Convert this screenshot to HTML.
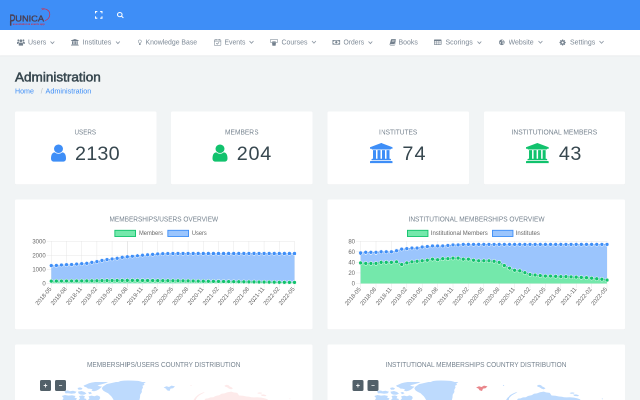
<!DOCTYPE html>
<html><head><meta charset="utf-8"><title>Administration</title>
<style>
html,body{margin:0;padding:0;width:640px;height:400px;overflow:hidden;background:#f1f4f5}
#w{position:absolute;left:0;top:0;width:1280px;height:800px;transform:scale(0.5);transform-origin:0 0;will-change:transform;overflow:hidden;background:#f1f4f5;font-family:"Liberation Sans",sans-serif}
.t{position:absolute;white-space:nowrap;font-family:"Liberation Sans",sans-serif}
.i{position:absolute;overflow:visible}
.b{position:absolute}
.card{position:absolute;background:#fff;border-radius:3px;box-shadow:0 1px 1px rgba(0,0,0,.04)}
svg text{font-family:"Liberation Sans",sans-serif}
</style></head><body><div id="w">
<div class="b" style="left:0;top:0;width:1280px;height:59.5px;background:#3e8ef7"></div>
<svg class="i" style="left:16px;top:12px;width:92px;height:44px;" viewBox="8 6 46 22" preserveAspectRatio="none"><text fill="#4a3f52" stroke="#4a3f52"><tspan x="9.5" y="25.4" font-size="15.3" stroke-width="0.35" textLength="5.9" lengthAdjust="spacingAndGlyphs">P</tspan><tspan x="15.3" y="21.3" font-size="7.9" stroke-width="0.36" textLength="28.7" lengthAdjust="spacingAndGlyphs">UNICA</tspan></text><rect x="9.95" y="21" width="1.45" height="4.6" fill="#4a3f52"/><text x="12.8" y="25.1" font-size="2.9" font-weight="700" fill="#c8324e" textLength="32" lengthAdjust="spacingAndGlyphs">association &amp; events app</text><path d="M42.4 9.3C46.200 8 50 10.800 49.800 14.700C49.600 17.900 47.300 20.100 44.900 20.600" fill="none" stroke="#d42b48" stroke-width="0.7"/><path d="M41.200 8.300l1.300 1.300 0.400-1.700 0.700 1.500 1.200-0.900" fill="none" stroke="#cf2f4b" stroke-width="0.5"/><path d="M42 9.800C40 11.500 38.500 13.500 37.500 15.500" fill="none" stroke="#cf2f4b" stroke-width="0.25" stroke-dasharray="0.4 0.5" opacity=".7"/></svg>
<svg class="i" style="left:189.5px;top:22px;width:15px;height:15.5px;" viewBox="0 0 10 10" preserveAspectRatio="none"><path d="M0.7 3.1V0.7H3.1M6.900 0.7H9.300V3.1M9.300 6.900V9.300H6.900M3.1 9.300H0.7V6.900" fill="none" stroke="#fff" stroke-width="1.4"/></svg>
<svg class="i" style="left:233.8px;top:23.8px;width:13.2px;height:12.2px;" viewBox="64 128 1664 1664" preserveAspectRatio="none"><path d="M1216 832q0-185-131.500-316.500t-316.500-131.500-316.500 131.500-131.500 316.500 131.500 316.500 316.500 131.500 316.500-131.500 131.500-316.500zm512 832q0 52-38 90t-90 38q-54 0-90-38l-343-342q-179 124-399 124-143 0-273.500-55.500t-225-150-150-225-55.500-273.500 55.500-273.500 150-225 225-150 273.500-55.500 273.500 55.500 225 150 150 225 55.500 273.500q0 220-124 399l343 343q37 37 37 90z" fill="#fff"/></svg>
<div class="b" style="left:0;top:59.5px;width:1280px;height:51px;background:#fff;box-shadow:0 1px 2px rgba(0,0,0,.08)"></div>
<span class="t" style="left:56.2px;top:73.849px;font-size:14px;line-height:1.5;color:#7c8895;transform:scaleX(1.0011);transform-origin:0 0;">Users</span>
<svg class="i" style="left:100.4px;top:81.51px;width:9.6px;height:6.18px;" viewBox="-0.5 -0.5 4.8 3.09" preserveAspectRatio="none"><path d="M0 0L1.9 2.09L3.8 0" fill="none" stroke="#8c97a3" stroke-width="0.85"/></svg>
<span class="t" style="left:165px;top:73.849px;font-size:14px;line-height:1.5;color:#7c8895;transform:scaleX(1.0281);transform-origin:0 0;">Institutes</span>
<svg class="i" style="left:230.6px;top:81.51px;width:9.6px;height:6.18px;" viewBox="-0.5 -0.5 4.8 3.09" preserveAspectRatio="none"><path d="M0 0L1.9 2.09L3.8 0" fill="none" stroke="#8c97a3" stroke-width="0.85"/></svg>
<span class="t" style="left:291.2px;top:73.849px;font-size:14px;line-height:1.5;color:#7c8895;transform:scaleX(0.9821);transform-origin:0 0;">Knowledge Base</span>
<span class="t" style="left:449px;top:73.849px;font-size:14px;line-height:1.5;color:#7c8895;transform:scaleX(0.9766);transform-origin:0 0;">Events</span>
<svg class="i" style="left:498.4px;top:81.4px;width:10px;height:6.4px;" viewBox="-0.5 -0.5 5 3.2" preserveAspectRatio="none"><path d="M0 0L2 2.2L4 0" fill="none" stroke="#8c97a3" stroke-width="0.85"/></svg>
<span class="t" style="left:563px;top:73.849px;font-size:14px;line-height:1.5;color:#7c8895;transform:scaleX(0.9975);transform-origin:0 0;">Courses</span>
<svg class="i" style="left:622.8px;top:81.455px;width:9.8px;height:6.29px;" viewBox="-0.5 -0.5 4.9 3.145" preserveAspectRatio="none"><path d="M0 0L1.95 2.145L3.9 0" fill="none" stroke="#8c97a3" stroke-width="0.85"/></svg>
<span class="t" style="left:686.8px;top:73.849px;font-size:14px;line-height:1.5;color:#7c8895;transform:scaleX(0.9629);transform-origin:0 0;">Orders</span>
<svg class="i" style="left:735.6px;top:81.51px;width:9.6px;height:6.18px;" viewBox="-0.5 -0.5 4.8 3.09" preserveAspectRatio="none"><path d="M0 0L1.9 2.09L3.8 0" fill="none" stroke="#8c97a3" stroke-width="0.85"/></svg>
<span class="t" style="left:797.4px;top:73.849px;font-size:14px;line-height:1.5;color:#7c8895;transform:scaleX(0.9920);transform-origin:0 0;">Books</span>
<span class="t" style="left:890.8px;top:73.849px;font-size:14px;line-height:1.5;color:#7c8895;transform:scaleX(0.9987);transform-origin:0 0;">Scorings</span>
<svg class="i" style="left:953.6px;top:81.51px;width:9.6px;height:6.18px;" viewBox="-0.5 -0.5 4.8 3.09" preserveAspectRatio="none"><path d="M0 0L1.9 2.09L3.8 0" fill="none" stroke="#8c97a3" stroke-width="0.85"/></svg>
<span class="t" style="left:1017.4px;top:73.849px;font-size:14px;line-height:1.5;color:#7c8895;transform:scaleX(1.0016);transform-origin:0 0;">Website</span>
<svg class="i" style="left:1075.6px;top:81.455px;width:9.8px;height:6.29px;" viewBox="-0.5 -0.5 4.9 3.145" preserveAspectRatio="none"><path d="M0 0L1.95 2.145L3.9 0" fill="none" stroke="#8c97a3" stroke-width="0.85"/></svg>
<span class="t" style="left:1139.6px;top:73.849px;font-size:14px;line-height:1.5;color:#7c8895;transform:scaleX(0.9963);transform-origin:0 0;">Settings</span>
<svg class="i" style="left:1198.2px;top:81.345px;width:10.2px;height:6.51px;" viewBox="-0.5 -0.5 5.1 3.255" preserveAspectRatio="none"><path d="M0 0L2.05 2.255L4.1 0" fill="none" stroke="#8c97a3" stroke-width="0.85"/></svg>
<svg class="i" style="left:34.2px;top:78.2px;width:15.6px;height:13.2px;" viewBox="0 0 16 13" preserveAspectRatio="none"><g fill="#73808d"><circle cx="8" cy="3.4" r="2.6"/><path d="M3.6 13V10.2Q3.6 7 8 7T12.400 10.2V13z"/><circle cx="2.8" cy="2.6" r="1.9"/><circle cx="13.2" cy="2.6" r="1.9"/><path d="M0 9.500V7.600Q0 5.200 3.200 5.200Q4.500 5.200 5.200 5.800Q3 7 2.800 9.500zM16 9.500V7.600Q16 5.200 12.800 5.200Q11.500 5.200 10.800 5.800Q13 7 13.200 9.500z"/></g></svg>
<svg class="i" style="left:142.3px;top:78.3px;width:15.5px;height:13.1px;" viewBox="64 0 1920 1792" preserveAspectRatio="none"><path d="M1024 0l960 384v128h-128q0 26-20.500 45t-48.500 19h-1526q-28 0-48.500-19t-20.500-45h-128v-128zm-704 640h256v768h128v-768h256v768h128v-768h256v768h128v-768h256v768h59q28 0 48.500 19t20.500 45v64h-1664v-64q0-26 20.500-45t48.500-19h59v-768zm1595 960q28 0 48.500 19t20.500 45v128h-1920v-128q0-26 20.500-45t48.500-19h1782z" fill="#73808d"/></svg>
<svg class="i" style="left:276.2px;top:79.2px;width:7.4px;height:11.2px;" viewBox="0 0 8 12" preserveAspectRatio="none"><path d="M4 0.700A3.300 3.300 0 0 0 2.200 6.800Q2.700 7.400 2.700 8.400H5.300Q5.300 7.400 5.800 6.800A3.300 3.300 0 0 0 4 0.700z" fill="none" stroke="#73808d" stroke-width="1.1"/><rect x="2.500" y="9.200" width="3" height="2.600" rx="0.8" fill="#73808d"/></svg>
<svg class="i" style="left:427.8px;top:78.2px;width:14.4px;height:13.4px;" viewBox="0 0 14 13" preserveAspectRatio="none"><rect x="0.600" y="1.700" width="12.800" height="10.700" rx="0.8" fill="none" stroke="#73808d" stroke-width="1.0"/><path d="M0.600 4.200H13.400" stroke="#73808d" stroke-width="0.9"/><rect x="3.200" y="0" width="1.500" height="2.800" fill="#73808d"/><rect x="9.300" y="0" width="1.500" height="2.800" fill="#73808d"/><path d="M4.200 8.200L6.300 10.100L9.800 6.500" fill="none" stroke="#73808d" stroke-width="1.2"/></svg>
<svg class="i" style="left:541.2px;top:78px;width:14px;height:13.6px;" viewBox="0 0 14 13" preserveAspectRatio="none"><rect x="0.500" y="0.500" width="13" height="6.400" fill="none" stroke="#73808d" stroke-width="1.0"/><circle cx="5.200" cy="5.400" r="1.400" fill="#73808d"/><circle cx="8.800" cy="5.400" r="1.400" fill="#73808d"/><path d="M3 6.600H11L10.200 13H3.800z" fill="#73808d"/></svg>
<svg class="i" style="left:664.6px;top:79.8px;width:15.2px;height:9.2px;" viewBox="0 0 16 9.500" preserveAspectRatio="none"><rect x="0.700" y="0.700" width="14.600" height="8.100" fill="none" stroke="#73808d" stroke-width="1.4"/><ellipse cx="8" cy="4.750" rx="2.400" ry="2.600" fill="#73808d"/><path d="M1.400 1.400H4Q4 3.400 1.400 3.600zM14.600 1.400H12Q12 3.400 14.600 3.600zM1.400 8.100H4Q4 6.100 1.400 5.900zM14.600 8.100H12Q12 6.100 14.600 5.900z" fill="#73808d"/></svg>
<svg class="i" style="left:779.4px;top:77.8px;width:13px;height:13px;" viewBox="0 0 13 13" preserveAspectRatio="none"><path d="M4.200 0.300H12Q13 0.500 12.700 1.600L10.400 9.600Q10.100 10.500 9.200 10.500H1.800Q1 10.700 1.400 11.400Q1.800 11.900 2.600 11.900H9.800Q10.500 11.900 10.800 11.100L12.900 3.800Q13.300 4.500 13 5.400L10.900 12.100Q10.600 13 9.600 13H2.400Q0.600 12.900 0.200 11.300Q0 10.400 0.600 9.400L3 1.300Q3.300 0.300 4.200 0.300z" fill="#73808d"/><path d="M5.200 2.800H10.400M4.600 4.800H9.800" stroke="#fff" stroke-width="0.8"/></svg>
<svg class="i" style="left:868.4px;top:78.8px;width:15px;height:11px;" viewBox="0 0 15 11" preserveAspectRatio="none"><rect x="0.600" y="0.600" width="13.800" height="9.800" rx="0.8" fill="none" stroke="#73808d" stroke-width="1.2"/><rect x="0.600" y="0.600" width="13.800" height="2.800" fill="#73808d"/><path d="M5.200 3V10.400M9.800 3V10.400M0.600 6.800H14.400" stroke="#73808d" stroke-width="0.9" fill="none"/></svg>
<svg class="i" style="left:998px;top:79.4px;width:11.2px;height:11.2px;" viewBox="0 0 12 12" preserveAspectRatio="none"><circle cx="6" cy="6" r="6" fill="#73808d"/><path d="M6.500 1.200Q9 1.200 10.400 3.600L9 4.600L7.600 3.800L6.400 4.800L5.600 3.600zM7.400 6Q9.600 5.600 10.800 6.800Q10.400 9.400 8.400 10.400Q7.800 8.600 7 8zM1.400 4.400Q2.600 5.600 4 6L4.400 7.600L3.600 9.400Q1.200 7.600 1.400 4.400z" fill="#fff" opacity=".85"/></svg>
<svg class="i" style="left:1119px;top:79px;width:12.4px;height:12px;" viewBox="128 128 1536 1536" preserveAspectRatio="none"><path d="M1152 896q0-106-75-181t-181-75-181 75-75 181 75 181 181 75 181-75 75-181zm512-109v222q0 12-8 23t-20 13l-185 28q-19 54-39 91 35 50 107 138 10 12 10 25t-9 23q-27 37-99 108t-94 71q-12 0-26-9l-138-108q-44 23-91 38-16 136-29 186-7 28-36 28h-222q-14 0-24.500-8.500t-11.500-21.500l-28-184q-49-16-90-37l-141 107q-10 9-25 9-14 0-25-11-126-114-165-168-7-10-7-23 0-12 8-23 15-21 51-66.500t54-70.500q-27-50-41-99l-183-27q-13-2-21-12.500t-8-23.500v-222q0-12 8-23t19-13l186-28q14-46 39-92-40-57-107-138-10-12-10-24 0-10 9-23 26-36 98.500-107.500t94.500-71.500q13 0 26 10l138 107q44-23 91-38 16-136 29-186 7-28 36-28h222q14 0 24.500 8.500t11.500 21.500l28 184q49 16 90 37l142-107q9-9 24-9 13 0 25 10 129 119 165 170 7 8 7 22 0 12-8 23-15 21-51 66.500t-54 70.500q26 50 41 98l183 28q13 2 21 12.500t8 23.500z" fill="#73808d"/></svg>
<span class="t" style="left:30px;top:136.368px;font-size:25.2px;line-height:1.5;color:#37474f;transform:scaleX(1.0747);transform-origin:0 0;-webkit-text-stroke:1px #37474f;">Administration</span>
<span class="t" style="left:30px;top:171.649px;font-size:14px;line-height:1.5;color:#3e8ef7;transform:scaleX(1.0122);transform-origin:0 0;">Home</span>
<span class="t" style="left:81.4px;top:171.649px;font-size:14px;line-height:1.5;color:#b4bcc4;">/</span>
<span class="t" style="left:90.8px;top:171.649px;font-size:14px;line-height:1.5;color:#3e8ef7;transform:scaleX(1.0327);transform-origin:0 0;">Administration</span>
<div class="card" style="left:30px;top:222.5px;width:282.8px;height:146.5px"></div>
<span class="t" style="left:149.4px;top:253.849px;font-size:14px;line-height:1.5;color:#76838f;transform:scaleX(0.8956);transform-origin:0 0;">USERS</span>
<svg class="i" style="left:102px;top:289.2px;width:30px;height:34.2px;" viewBox="256 128 1280 1536" preserveAspectRatio="none"><path d="M1536 1399q0 109-62.500 187t-150.500 78h-854q-88 0-150.500-78t-62.500-187q0-85 8.500-160.500t31.500-152 58.500-131 94-89 134.500-34.500q131 128 313 128t313-128q76 0 134.500 34.500t94 89 58.500 131 31.500 152 8.500 160.500zm-256-887q0 159-112.500 271.500t-271.500 112.500-271.500-112.500-112.500-271.500 112.500-271.500 271.500-112.500 271.500 112.500 112.500 271.500z" fill="#3e8ef7"/></svg>
<span class="t" style="left:150.018px;top:277.479px;font-size:39.6px;line-height:1.5;color:#37474f;letter-spacing:0.417px;">2130</span>
<div class="card" style="left:342.2px;top:222.5px;width:282.8px;height:146.5px"></div>
<span class="t" style="left:450.2px;top:253.849px;font-size:14px;line-height:1.5;color:#76838f;transform:scaleX(0.9465);transform-origin:0 0;">MEMBERS</span>
<svg class="i" style="left:425.2px;top:289.2px;width:30px;height:34.2px;" viewBox="256 128 1280 1536" preserveAspectRatio="none"><path d="M1536 1399q0 109-62.500 187t-150.500 78h-854q-88 0-150.500-78t-62.500-187q0-85 8.500-160.500t31.500-152 58.500-131 94-89 134.500-34.500q131 128 313 128t313-128q76 0 134.500 34.500t94 89 58.500 131 31.500 152 8.500 160.500zm-256-887q0 159-112.500 271.500t-271.500 112.500-271.500-112.500-112.500-271.500 112.500-271.500 271.500-112.500 271.500 112.500 112.500 271.500z" fill="#11c26d"/></svg>
<span class="t" style="left:473.618px;top:277.479px;font-size:39.6px;line-height:1.5;color:#37474f;letter-spacing:1.431px;">204</span>
<div class="card" style="left:655px;top:222.5px;width:282.8px;height:146.5px"></div>
<span class="t" style="left:758px;top:253.849px;font-size:14px;line-height:1.5;color:#76838f;transform:scaleX(0.9379);transform-origin:0 0;">INSTITUTES</span>
<svg class="i" style="left:740px;top:286.4px;width:45px;height:40.2px;" viewBox="64 0 1920 1792" preserveAspectRatio="none"><path d="M1024 0l960 384v128h-128q0 26-20.500 45t-48.500 19h-1526q-28 0-48.500-19t-20.500-45h-128v-128zm-704 640h256v768h128v-768h256v768h128v-768h256v768h128v-768h256v768h59q28 0 48.500 19t20.500 45v64h-1664v-64q0-26 20.500-45t48.500-19h59v-768zm1595 960q28 0 48.500 19t20.500 45v128h-1920v-128q0-26 20.500-45t48.500-19h1782z" fill="#3e8ef7"/></svg>
<span class="t" style="left:804.818px;top:277.479px;font-size:39.6px;line-height:1.5;color:#37474f;letter-spacing:2.158px;">74</span>
<div class="card" style="left:967.6px;top:222.5px;width:282.8px;height:146.5px"></div>
<span class="t" style="left:1023.4px;top:253.849px;font-size:14px;line-height:1.5;color:#76838f;transform:scaleX(0.9567);transform-origin:0 0;">INSTITUTIONAL MEMBERS</span>
<svg class="i" style="left:1051.6px;top:286.4px;width:45.4px;height:40.2px;" viewBox="64 0 1920 1792" preserveAspectRatio="none"><path d="M1024 0l960 384v128h-128q0 26-20.500 45t-48.500 19h-1526q-28 0-48.500-19t-20.500-45h-128v-128zm-704 640h256v768h128v-768h256v768h128v-768h256v768h128v-768h256v768h59q28 0 48.500 19t20.500 45v64h-1664v-64q0-26 20.500-45t48.500-19h59v-768zm1595 960q28 0 48.500 19t20.500 45v128h-1920v-128q0-26 20.500-45t48.500-19h1782z" fill="#11c26d"/></svg>
<span class="t" style="left:1117.818px;top:277.479px;font-size:39.6px;line-height:1.5;color:#37474f;letter-spacing:0.958px;">43</span>
<div class="card" style="left:30px;top:399px;width:595px;height:259.5px"></div>
<span class="t" style="left:218.9px;top:428.249px;font-size:14px;line-height:1.5;color:#76838f;transform:scaleX(0.9259);transform-origin:0 0;">MEMBERSHIPS/USERS OVERVIEW</span>
<svg class="i" style="left:30px;top:399px;width:595px;height:259.5px;" viewBox="15 199.5 297.5 129.75" preserveAspectRatio="none"><path d="M51.30 241.25V287.75" stroke="#e6e6e6" stroke-width="0.5"/><path d="M66.50 241.25V287.75" stroke="#e6e6e6" stroke-width="0.5"/><path d="M81.70 241.25V287.75" stroke="#e6e6e6" stroke-width="0.5"/><path d="M96.90 241.25V287.75" stroke="#e6e6e6" stroke-width="0.5"/><path d="M112.10 241.25V287.75" stroke="#e6e6e6" stroke-width="0.5"/><path d="M127.30 241.25V287.75" stroke="#e6e6e6" stroke-width="0.5"/><path d="M142.50 241.25V287.75" stroke="#e6e6e6" stroke-width="0.5"/><path d="M157.70 241.25V287.75" stroke="#e6e6e6" stroke-width="0.5"/><path d="M172.90 241.25V287.75" stroke="#e6e6e6" stroke-width="0.5"/><path d="M188.10 241.25V287.75" stroke="#e6e6e6" stroke-width="0.5"/><path d="M203.30 241.25V287.75" stroke="#e6e6e6" stroke-width="0.5"/><path d="M218.50 241.25V287.75" stroke="#e6e6e6" stroke-width="0.5"/><path d="M233.70 241.25V287.75" stroke="#e6e6e6" stroke-width="0.5"/><path d="M248.90 241.25V287.75" stroke="#e6e6e6" stroke-width="0.5"/><path d="M264.10 241.25V287.75" stroke="#e6e6e6" stroke-width="0.5"/><path d="M279.30 241.25V287.75" stroke="#e6e6e6" stroke-width="0.5"/><path d="M294.50 241.25V287.75" stroke="#e6e6e6" stroke-width="0.5"/><path d="M46.80 283.25H294.50" stroke="#e6e6e6" stroke-width="0.5"/><text x="45.70" y="285.40" font-size="6" fill="#666" text-anchor="end">0</text><path d="M46.80 269.25H294.50" stroke="#e6e6e6" stroke-width="0.5"/><text x="45.70" y="271.40" font-size="6" fill="#666" text-anchor="end">1000</text><path d="M46.80 255.25H294.50" stroke="#e6e6e6" stroke-width="0.5"/><text x="45.70" y="257.40" font-size="6" fill="#666" text-anchor="end">2000</text><path d="M46.80 241.25H294.50" stroke="#e6e6e6" stroke-width="0.5"/><text x="45.70" y="243.40" font-size="6" fill="#666" text-anchor="end">3000</text><path d="M51.30 283.25L51.30 265.61 L56.37 265.47 L61.43 265.05 L66.50 264.70 L71.57 264.56 L76.63 264.14 L81.70 263.72 L86.77 263.37 L91.83 262.39 L96.90 261.62 L101.97 260.43 L107.03 259.59 L112.10 259.03 L117.17 258.33 L122.23 257.35 L127.30 256.79 L132.37 256.23 L137.43 255.67 L142.50 255.25 L147.57 254.83 L152.63 254.41 L157.70 253.99 L162.77 253.71 L167.83 253.57 L172.90 253.50 L177.97 253.43 L183.03 253.43 L188.10 253.43 L193.17 253.43 L198.23 253.43 L203.30 253.43 L208.37 253.43 L213.43 253.43 L218.50 253.43 L223.57 253.43 L228.63 253.43 L233.70 253.43 L238.77 253.43 L243.83 253.43 L248.90 253.43 L253.97 253.43 L259.03 253.43 L264.10 253.43 L269.17 253.43 L274.23 253.43 L279.30 253.43 L284.37 253.43 L289.43 253.43 L294.50 253.43L294.50 283.25Z" fill="#9bc5fd"/><path d="M51.30 265.61 L56.37 265.47 L61.43 265.05 L66.50 264.70 L71.57 264.56 L76.63 264.14 L81.70 263.72 L86.77 263.37 L91.83 262.39 L96.90 261.62 L101.97 260.43 L107.03 259.59 L112.10 259.03 L117.17 258.33 L122.23 257.35 L127.30 256.79 L132.37 256.23 L137.43 255.67 L142.50 255.25 L147.57 254.83 L152.63 254.41 L157.70 253.99 L162.77 253.71 L167.83 253.57 L172.90 253.50 L177.97 253.43 L183.03 253.43 L188.10 253.43 L193.17 253.43 L198.23 253.43 L203.30 253.43 L208.37 253.43 L213.43 253.43 L218.50 253.43 L223.57 253.43 L228.63 253.43 L233.70 253.43 L238.77 253.43 L243.83 253.43 L248.90 253.43 L253.97 253.43 L259.03 253.43 L264.10 253.43 L269.17 253.43 L274.23 253.43 L279.30 253.43 L284.37 253.43 L289.43 253.43 L294.50 253.43" fill="none" stroke="#3e8ef7" stroke-width="0.6"/><path d="M51.30 283.25L51.30 281.15 L56.37 281.08 L61.43 281.04 L66.50 281.01 L71.57 280.98 L76.63 280.94 L81.70 280.90 L86.77 280.87 L91.83 280.80 L96.90 280.73 L101.97 280.59 L107.03 280.52 L112.10 280.48 L117.17 280.45 L122.23 280.42 L127.30 280.38 L132.37 280.38 L137.43 280.38 L142.50 280.45 L147.57 280.48 L152.63 280.52 L157.70 280.59 L162.77 280.62 L167.83 280.66 L172.90 280.70 L177.97 280.73 L183.03 280.80 L188.10 280.87 L193.17 281.01 L198.23 281.15 L203.30 281.22 L208.37 281.29 L213.43 281.36 L218.50 281.43 L223.57 281.50 L228.63 281.57 L233.70 281.64 L238.77 281.71 L243.83 281.78 L248.90 281.85 L253.97 281.92 L259.03 281.99 L264.10 282.06 L269.17 282.13 L274.23 282.20 L279.30 282.27 L284.37 282.34 L289.43 282.38 L294.50 282.41L294.50 283.25Z" fill="#74e8ab"/><path d="M51.30 281.15 L56.37 281.08 L61.43 281.04 L66.50 281.01 L71.57 280.98 L76.63 280.94 L81.70 280.90 L86.77 280.87 L91.83 280.80 L96.90 280.73 L101.97 280.59 L107.03 280.52 L112.10 280.48 L117.17 280.45 L122.23 280.42 L127.30 280.38 L132.37 280.38 L137.43 280.38 L142.50 280.45 L147.57 280.48 L152.63 280.52 L157.70 280.59 L162.77 280.62 L167.83 280.66 L172.90 280.70 L177.97 280.73 L183.03 280.80 L188.10 280.87 L193.17 281.01 L198.23 281.15 L203.30 281.22 L208.37 281.29 L213.43 281.36 L218.50 281.43 L223.57 281.50 L228.63 281.57 L233.70 281.64 L238.77 281.71 L243.83 281.78 L248.90 281.85 L253.97 281.92 L259.03 281.99 L264.10 282.06 L269.17 282.13 L274.23 282.20 L279.30 282.27 L284.37 282.34 L289.43 282.38 L294.50 282.41" fill="none" stroke="#11c26d" stroke-width="0.6"/><circle cx="51.30" cy="265.61" r="1.95" fill="#3e8ef7" stroke="#fff" stroke-width="0.5"/><circle cx="56.37" cy="265.47" r="1.95" fill="#3e8ef7" stroke="#fff" stroke-width="0.5"/><circle cx="61.43" cy="265.05" r="1.95" fill="#3e8ef7" stroke="#fff" stroke-width="0.5"/><circle cx="66.50" cy="264.70" r="1.95" fill="#3e8ef7" stroke="#fff" stroke-width="0.5"/><circle cx="71.57" cy="264.56" r="1.95" fill="#3e8ef7" stroke="#fff" stroke-width="0.5"/><circle cx="76.63" cy="264.14" r="1.95" fill="#3e8ef7" stroke="#fff" stroke-width="0.5"/><circle cx="81.70" cy="263.72" r="1.95" fill="#3e8ef7" stroke="#fff" stroke-width="0.5"/><circle cx="86.77" cy="263.37" r="1.95" fill="#3e8ef7" stroke="#fff" stroke-width="0.5"/><circle cx="91.83" cy="262.39" r="1.95" fill="#3e8ef7" stroke="#fff" stroke-width="0.5"/><circle cx="96.90" cy="261.62" r="1.95" fill="#3e8ef7" stroke="#fff" stroke-width="0.5"/><circle cx="101.97" cy="260.43" r="1.95" fill="#3e8ef7" stroke="#fff" stroke-width="0.5"/><circle cx="107.03" cy="259.59" r="1.95" fill="#3e8ef7" stroke="#fff" stroke-width="0.5"/><circle cx="112.10" cy="259.03" r="1.95" fill="#3e8ef7" stroke="#fff" stroke-width="0.5"/><circle cx="117.17" cy="258.33" r="1.95" fill="#3e8ef7" stroke="#fff" stroke-width="0.5"/><circle cx="122.23" cy="257.35" r="1.95" fill="#3e8ef7" stroke="#fff" stroke-width="0.5"/><circle cx="127.30" cy="256.79" r="1.95" fill="#3e8ef7" stroke="#fff" stroke-width="0.5"/><circle cx="132.37" cy="256.23" r="1.95" fill="#3e8ef7" stroke="#fff" stroke-width="0.5"/><circle cx="137.43" cy="255.67" r="1.95" fill="#3e8ef7" stroke="#fff" stroke-width="0.5"/><circle cx="142.50" cy="255.25" r="1.95" fill="#3e8ef7" stroke="#fff" stroke-width="0.5"/><circle cx="147.57" cy="254.83" r="1.95" fill="#3e8ef7" stroke="#fff" stroke-width="0.5"/><circle cx="152.63" cy="254.41" r="1.95" fill="#3e8ef7" stroke="#fff" stroke-width="0.5"/><circle cx="157.70" cy="253.99" r="1.95" fill="#3e8ef7" stroke="#fff" stroke-width="0.5"/><circle cx="162.77" cy="253.71" r="1.95" fill="#3e8ef7" stroke="#fff" stroke-width="0.5"/><circle cx="167.83" cy="253.57" r="1.95" fill="#3e8ef7" stroke="#fff" stroke-width="0.5"/><circle cx="172.90" cy="253.50" r="1.95" fill="#3e8ef7" stroke="#fff" stroke-width="0.5"/><circle cx="177.97" cy="253.43" r="1.95" fill="#3e8ef7" stroke="#fff" stroke-width="0.5"/><circle cx="183.03" cy="253.43" r="1.95" fill="#3e8ef7" stroke="#fff" stroke-width="0.5"/><circle cx="188.10" cy="253.43" r="1.95" fill="#3e8ef7" stroke="#fff" stroke-width="0.5"/><circle cx="193.17" cy="253.43" r="1.95" fill="#3e8ef7" stroke="#fff" stroke-width="0.5"/><circle cx="198.23" cy="253.43" r="1.95" fill="#3e8ef7" stroke="#fff" stroke-width="0.5"/><circle cx="203.30" cy="253.43" r="1.95" fill="#3e8ef7" stroke="#fff" stroke-width="0.5"/><circle cx="208.37" cy="253.43" r="1.95" fill="#3e8ef7" stroke="#fff" stroke-width="0.5"/><circle cx="213.43" cy="253.43" r="1.95" fill="#3e8ef7" stroke="#fff" stroke-width="0.5"/><circle cx="218.50" cy="253.43" r="1.95" fill="#3e8ef7" stroke="#fff" stroke-width="0.5"/><circle cx="223.57" cy="253.43" r="1.95" fill="#3e8ef7" stroke="#fff" stroke-width="0.5"/><circle cx="228.63" cy="253.43" r="1.95" fill="#3e8ef7" stroke="#fff" stroke-width="0.5"/><circle cx="233.70" cy="253.43" r="1.95" fill="#3e8ef7" stroke="#fff" stroke-width="0.5"/><circle cx="238.77" cy="253.43" r="1.95" fill="#3e8ef7" stroke="#fff" stroke-width="0.5"/><circle cx="243.83" cy="253.43" r="1.95" fill="#3e8ef7" stroke="#fff" stroke-width="0.5"/><circle cx="248.90" cy="253.43" r="1.95" fill="#3e8ef7" stroke="#fff" stroke-width="0.5"/><circle cx="253.97" cy="253.43" r="1.95" fill="#3e8ef7" stroke="#fff" stroke-width="0.5"/><circle cx="259.03" cy="253.43" r="1.95" fill="#3e8ef7" stroke="#fff" stroke-width="0.5"/><circle cx="264.10" cy="253.43" r="1.95" fill="#3e8ef7" stroke="#fff" stroke-width="0.5"/><circle cx="269.17" cy="253.43" r="1.95" fill="#3e8ef7" stroke="#fff" stroke-width="0.5"/><circle cx="274.23" cy="253.43" r="1.95" fill="#3e8ef7" stroke="#fff" stroke-width="0.5"/><circle cx="279.30" cy="253.43" r="1.95" fill="#3e8ef7" stroke="#fff" stroke-width="0.5"/><circle cx="284.37" cy="253.43" r="1.95" fill="#3e8ef7" stroke="#fff" stroke-width="0.5"/><circle cx="289.43" cy="253.43" r="1.95" fill="#3e8ef7" stroke="#fff" stroke-width="0.5"/><circle cx="294.50" cy="253.43" r="1.95" fill="#3e8ef7" stroke="#fff" stroke-width="0.5"/><circle cx="51.30" cy="281.15" r="1.95" fill="#11c26d" stroke="#fff" stroke-width="0.5"/><circle cx="56.37" cy="281.08" r="1.95" fill="#11c26d" stroke="#fff" stroke-width="0.5"/><circle cx="61.43" cy="281.04" r="1.95" fill="#11c26d" stroke="#fff" stroke-width="0.5"/><circle cx="66.50" cy="281.01" r="1.95" fill="#11c26d" stroke="#fff" stroke-width="0.5"/><circle cx="71.57" cy="280.98" r="1.95" fill="#11c26d" stroke="#fff" stroke-width="0.5"/><circle cx="76.63" cy="280.94" r="1.95" fill="#11c26d" stroke="#fff" stroke-width="0.5"/><circle cx="81.70" cy="280.90" r="1.95" fill="#11c26d" stroke="#fff" stroke-width="0.5"/><circle cx="86.77" cy="280.87" r="1.95" fill="#11c26d" stroke="#fff" stroke-width="0.5"/><circle cx="91.83" cy="280.80" r="1.95" fill="#11c26d" stroke="#fff" stroke-width="0.5"/><circle cx="96.90" cy="280.73" r="1.95" fill="#11c26d" stroke="#fff" stroke-width="0.5"/><circle cx="101.97" cy="280.59" r="1.95" fill="#11c26d" stroke="#fff" stroke-width="0.5"/><circle cx="107.03" cy="280.52" r="1.95" fill="#11c26d" stroke="#fff" stroke-width="0.5"/><circle cx="112.10" cy="280.48" r="1.95" fill="#11c26d" stroke="#fff" stroke-width="0.5"/><circle cx="117.17" cy="280.45" r="1.95" fill="#11c26d" stroke="#fff" stroke-width="0.5"/><circle cx="122.23" cy="280.42" r="1.95" fill="#11c26d" stroke="#fff" stroke-width="0.5"/><circle cx="127.30" cy="280.38" r="1.95" fill="#11c26d" stroke="#fff" stroke-width="0.5"/><circle cx="132.37" cy="280.38" r="1.95" fill="#11c26d" stroke="#fff" stroke-width="0.5"/><circle cx="137.43" cy="280.38" r="1.95" fill="#11c26d" stroke="#fff" stroke-width="0.5"/><circle cx="142.50" cy="280.45" r="1.95" fill="#11c26d" stroke="#fff" stroke-width="0.5"/><circle cx="147.57" cy="280.48" r="1.95" fill="#11c26d" stroke="#fff" stroke-width="0.5"/><circle cx="152.63" cy="280.52" r="1.95" fill="#11c26d" stroke="#fff" stroke-width="0.5"/><circle cx="157.70" cy="280.59" r="1.95" fill="#11c26d" stroke="#fff" stroke-width="0.5"/><circle cx="162.77" cy="280.62" r="1.95" fill="#11c26d" stroke="#fff" stroke-width="0.5"/><circle cx="167.83" cy="280.66" r="1.95" fill="#11c26d" stroke="#fff" stroke-width="0.5"/><circle cx="172.90" cy="280.70" r="1.95" fill="#11c26d" stroke="#fff" stroke-width="0.5"/><circle cx="177.97" cy="280.73" r="1.95" fill="#11c26d" stroke="#fff" stroke-width="0.5"/><circle cx="183.03" cy="280.80" r="1.95" fill="#11c26d" stroke="#fff" stroke-width="0.5"/><circle cx="188.10" cy="280.87" r="1.95" fill="#11c26d" stroke="#fff" stroke-width="0.5"/><circle cx="193.17" cy="281.01" r="1.95" fill="#11c26d" stroke="#fff" stroke-width="0.5"/><circle cx="198.23" cy="281.15" r="1.95" fill="#11c26d" stroke="#fff" stroke-width="0.5"/><circle cx="203.30" cy="281.22" r="1.95" fill="#11c26d" stroke="#fff" stroke-width="0.5"/><circle cx="208.37" cy="281.29" r="1.95" fill="#11c26d" stroke="#fff" stroke-width="0.5"/><circle cx="213.43" cy="281.36" r="1.95" fill="#11c26d" stroke="#fff" stroke-width="0.5"/><circle cx="218.50" cy="281.43" r="1.95" fill="#11c26d" stroke="#fff" stroke-width="0.5"/><circle cx="223.57" cy="281.50" r="1.95" fill="#11c26d" stroke="#fff" stroke-width="0.5"/><circle cx="228.63" cy="281.57" r="1.95" fill="#11c26d" stroke="#fff" stroke-width="0.5"/><circle cx="233.70" cy="281.64" r="1.95" fill="#11c26d" stroke="#fff" stroke-width="0.5"/><circle cx="238.77" cy="281.71" r="1.95" fill="#11c26d" stroke="#fff" stroke-width="0.5"/><circle cx="243.83" cy="281.78" r="1.95" fill="#11c26d" stroke="#fff" stroke-width="0.5"/><circle cx="248.90" cy="281.85" r="1.95" fill="#11c26d" stroke="#fff" stroke-width="0.5"/><circle cx="253.97" cy="281.92" r="1.95" fill="#11c26d" stroke="#fff" stroke-width="0.5"/><circle cx="259.03" cy="281.99" r="1.95" fill="#11c26d" stroke="#fff" stroke-width="0.5"/><circle cx="264.10" cy="282.06" r="1.95" fill="#11c26d" stroke="#fff" stroke-width="0.5"/><circle cx="269.17" cy="282.13" r="1.95" fill="#11c26d" stroke="#fff" stroke-width="0.5"/><circle cx="274.23" cy="282.20" r="1.95" fill="#11c26d" stroke="#fff" stroke-width="0.5"/><circle cx="279.30" cy="282.27" r="1.95" fill="#11c26d" stroke="#fff" stroke-width="0.5"/><circle cx="284.37" cy="282.34" r="1.95" fill="#11c26d" stroke="#fff" stroke-width="0.5"/><circle cx="289.43" cy="282.38" r="1.95" fill="#11c26d" stroke="#fff" stroke-width="0.5"/><circle cx="294.50" cy="282.41" r="1.95" fill="#11c26d" stroke="#fff" stroke-width="0.5"/><text transform="translate(50.30 287.75) rotate(-50)" font-size="5.9" fill="#666" text-anchor="end" x="0" y="2.1">2018-05</text><text transform="translate(65.50 287.75) rotate(-50)" font-size="5.9" fill="#666" text-anchor="end" x="0" y="2.1">2018-08</text><text transform="translate(80.70 287.75) rotate(-50)" font-size="5.9" fill="#666" text-anchor="end" x="0" y="2.1">2018-11</text><text transform="translate(95.90 287.75) rotate(-50)" font-size="5.9" fill="#666" text-anchor="end" x="0" y="2.1">2019-02</text><text transform="translate(111.10 287.75) rotate(-50)" font-size="5.9" fill="#666" text-anchor="end" x="0" y="2.1">2019-05</text><text transform="translate(126.30 287.75) rotate(-50)" font-size="5.9" fill="#666" text-anchor="end" x="0" y="2.1">2019-08</text><text transform="translate(141.50 287.75) rotate(-50)" font-size="5.9" fill="#666" text-anchor="end" x="0" y="2.1">2019-11</text><text transform="translate(156.70 287.75) rotate(-50)" font-size="5.9" fill="#666" text-anchor="end" x="0" y="2.1">2020-02</text><text transform="translate(171.90 287.75) rotate(-50)" font-size="5.9" fill="#666" text-anchor="end" x="0" y="2.1">2020-05</text><text transform="translate(187.10 287.75) rotate(-50)" font-size="5.9" fill="#666" text-anchor="end" x="0" y="2.1">2020-08</text><text transform="translate(202.30 287.75) rotate(-50)" font-size="5.9" fill="#666" text-anchor="end" x="0" y="2.1">2020-11</text><text transform="translate(217.50 287.75) rotate(-50)" font-size="5.9" fill="#666" text-anchor="end" x="0" y="2.1">2021-02</text><text transform="translate(232.70 287.75) rotate(-50)" font-size="5.9" fill="#666" text-anchor="end" x="0" y="2.1">2021-05</text><text transform="translate(247.90 287.75) rotate(-50)" font-size="5.9" fill="#666" text-anchor="end" x="0" y="2.1">2021-08</text><text transform="translate(263.10 287.75) rotate(-50)" font-size="5.9" fill="#666" text-anchor="end" x="0" y="2.1">2021-11</text><text transform="translate(278.30 287.75) rotate(-50)" font-size="5.9" fill="#666" text-anchor="end" x="0" y="2.1">2022-02</text><text transform="translate(293.50 287.75) rotate(-50)" font-size="5.9" fill="#666" text-anchor="end" x="0" y="2.1">2022-05</text><rect x="114.85" y="230.3" width="20.70" height="6.2" fill="#74e8ab" stroke="#11c26d" stroke-width="0.9"/><text x="139.00" y="234.9" font-size="6" fill="#666" textLength="24.00" lengthAdjust="spacingAndGlyphs">Members</text><rect x="167.85" y="230.3" width="20.70" height="6.2" fill="#9bc5fd" stroke="#3e8ef7" stroke-width="0.9"/><text x="191.90" y="234.9" font-size="6" fill="#666" textLength="14.80" lengthAdjust="spacingAndGlyphs">Users</text></svg>
<div class="card" style="left:655px;top:399px;width:595px;height:259.5px"></div>
<span class="t" style="left:816.9px;top:428.249px;font-size:14px;line-height:1.5;color:#76838f;transform:scaleX(0.9356);transform-origin:0 0;">INSTITUTIONAL MEMBERSHIPS OVERVIEW</span>
<svg class="i" style="left:655px;top:399px;width:595px;height:259.5px;" viewBox="327.5 199.5 297.5 129.75" preserveAspectRatio="none"><path d="M360.60 241.25V288.00" stroke="#e6e6e6" stroke-width="0.5"/><path d="M376.00 241.25V288.00" stroke="#e6e6e6" stroke-width="0.5"/><path d="M391.40 241.25V288.00" stroke="#e6e6e6" stroke-width="0.5"/><path d="M406.80 241.25V288.00" stroke="#e6e6e6" stroke-width="0.5"/><path d="M422.20 241.25V288.00" stroke="#e6e6e6" stroke-width="0.5"/><path d="M437.60 241.25V288.00" stroke="#e6e6e6" stroke-width="0.5"/><path d="M453.00 241.25V288.00" stroke="#e6e6e6" stroke-width="0.5"/><path d="M468.40 241.25V288.00" stroke="#e6e6e6" stroke-width="0.5"/><path d="M483.80 241.25V288.00" stroke="#e6e6e6" stroke-width="0.5"/><path d="M499.20 241.25V288.00" stroke="#e6e6e6" stroke-width="0.5"/><path d="M514.60 241.25V288.00" stroke="#e6e6e6" stroke-width="0.5"/><path d="M530.00 241.25V288.00" stroke="#e6e6e6" stroke-width="0.5"/><path d="M545.40 241.25V288.00" stroke="#e6e6e6" stroke-width="0.5"/><path d="M560.80 241.25V288.00" stroke="#e6e6e6" stroke-width="0.5"/><path d="M576.20 241.25V288.00" stroke="#e6e6e6" stroke-width="0.5"/><path d="M591.60 241.25V288.00" stroke="#e6e6e6" stroke-width="0.5"/><path d="M607.00 241.25V288.00" stroke="#e6e6e6" stroke-width="0.5"/><path d="M356.10 283.50H607.00" stroke="#e6e6e6" stroke-width="0.5"/><text x="355.00" y="285.65" font-size="6" fill="#666" text-anchor="end">0</text><path d="M356.10 272.94H607.00" stroke="#e6e6e6" stroke-width="0.5"/><text x="355.00" y="275.09" font-size="6" fill="#666" text-anchor="end">20</text><path d="M356.10 262.38H607.00" stroke="#e6e6e6" stroke-width="0.5"/><text x="355.00" y="264.52" font-size="6" fill="#666" text-anchor="end">40</text><path d="M356.10 251.81H607.00" stroke="#e6e6e6" stroke-width="0.5"/><text x="355.00" y="253.96" font-size="6" fill="#666" text-anchor="end">60</text><path d="M356.10 241.25H607.00" stroke="#e6e6e6" stroke-width="0.5"/><text x="355.00" y="243.40" font-size="6" fill="#666" text-anchor="end">80</text><path d="M360.60 283.50L360.60 252.87 L365.73 252.34 L370.87 252.34 L376.00 252.34 L381.13 251.81 L386.27 251.81 L391.40 251.81 L396.53 250.76 L401.67 249.17 L406.80 248.64 L411.93 248.12 L417.07 248.12 L422.20 247.06 L427.33 246.53 L432.47 246.00 L437.60 246.00 L442.73 246.00 L447.87 245.47 L453.00 244.95 L458.13 244.95 L463.27 244.42 L468.40 244.42 L473.53 244.42 L478.67 244.42 L483.80 244.42 L488.93 244.42 L494.07 244.42 L499.20 244.42 L504.33 244.42 L509.47 244.42 L514.60 244.42 L519.73 244.42 L524.87 244.42 L530.00 244.42 L535.13 244.42 L540.27 244.42 L545.40 244.42 L550.53 244.42 L555.67 244.42 L560.80 244.42 L565.93 244.42 L571.07 244.42 L576.20 244.42 L581.33 244.42 L586.47 244.42 L591.60 244.42 L596.73 244.42 L601.87 244.42 L607.00 244.42L607.00 283.50Z" fill="#9bc5fd"/><path d="M360.60 252.87 L365.73 252.34 L370.87 252.34 L376.00 252.34 L381.13 251.81 L386.27 251.81 L391.40 251.81 L396.53 250.76 L401.67 249.17 L406.80 248.64 L411.93 248.12 L417.07 248.12 L422.20 247.06 L427.33 246.53 L432.47 246.00 L437.60 246.00 L442.73 246.00 L447.87 245.47 L453.00 244.95 L458.13 244.95 L463.27 244.42 L468.40 244.42 L473.53 244.42 L478.67 244.42 L483.80 244.42 L488.93 244.42 L494.07 244.42 L499.20 244.42 L504.33 244.42 L509.47 244.42 L514.60 244.42 L519.73 244.42 L524.87 244.42 L530.00 244.42 L535.13 244.42 L540.27 244.42 L545.40 244.42 L550.53 244.42 L555.67 244.42 L560.80 244.42 L565.93 244.42 L571.07 244.42 L576.20 244.42 L581.33 244.42 L586.47 244.42 L591.60 244.42 L596.73 244.42 L601.87 244.42 L607.00 244.42" fill="none" stroke="#3e8ef7" stroke-width="0.6"/><path d="M360.60 283.50L360.60 262.90 L365.73 263.43 L370.87 263.43 L376.00 263.43 L381.13 262.38 L386.27 262.38 L391.40 262.38 L396.53 261.85 L401.67 264.49 L406.80 262.90 L411.93 261.85 L417.07 261.32 L422.20 260.79 L427.33 260.26 L432.47 259.21 L437.60 259.73 L442.73 258.68 L447.87 258.68 L453.00 258.15 L458.13 258.15 L463.27 259.21 L468.40 259.21 L473.53 260.26 L478.67 260.79 L483.80 260.79 L488.93 260.79 L494.07 261.32 L499.20 262.38 L504.33 265.54 L509.47 268.18 L514.60 270.30 L519.73 270.82 L524.87 272.67 L530.00 274.52 L535.13 275.05 L540.27 275.58 L545.40 276.11 L550.53 276.11 L555.67 276.37 L560.80 276.63 L565.93 276.63 L571.07 276.90 L576.20 277.16 L581.33 277.43 L586.47 277.69 L591.60 278.22 L596.73 278.75 L601.87 279.27 L607.00 280.07L607.00 283.50Z" fill="#74e8ab"/><path d="M360.60 262.90 L365.73 263.43 L370.87 263.43 L376.00 263.43 L381.13 262.38 L386.27 262.38 L391.40 262.38 L396.53 261.85 L401.67 264.49 L406.80 262.90 L411.93 261.85 L417.07 261.32 L422.20 260.79 L427.33 260.26 L432.47 259.21 L437.60 259.73 L442.73 258.68 L447.87 258.68 L453.00 258.15 L458.13 258.15 L463.27 259.21 L468.40 259.21 L473.53 260.26 L478.67 260.79 L483.80 260.79 L488.93 260.79 L494.07 261.32 L499.20 262.38 L504.33 265.54 L509.47 268.18 L514.60 270.30 L519.73 270.82 L524.87 272.67 L530.00 274.52 L535.13 275.05 L540.27 275.58 L545.40 276.11 L550.53 276.11 L555.67 276.37 L560.80 276.63 L565.93 276.63 L571.07 276.90 L576.20 277.16 L581.33 277.43 L586.47 277.69 L591.60 278.22 L596.73 278.75 L601.87 279.27 L607.00 280.07" fill="none" stroke="#11c26d" stroke-width="0.6"/><circle cx="360.60" cy="252.87" r="1.95" fill="#3e8ef7" stroke="#fff" stroke-width="0.5"/><circle cx="365.73" cy="252.34" r="1.95" fill="#3e8ef7" stroke="#fff" stroke-width="0.5"/><circle cx="370.87" cy="252.34" r="1.95" fill="#3e8ef7" stroke="#fff" stroke-width="0.5"/><circle cx="376.00" cy="252.34" r="1.95" fill="#3e8ef7" stroke="#fff" stroke-width="0.5"/><circle cx="381.13" cy="251.81" r="1.95" fill="#3e8ef7" stroke="#fff" stroke-width="0.5"/><circle cx="386.27" cy="251.81" r="1.95" fill="#3e8ef7" stroke="#fff" stroke-width="0.5"/><circle cx="391.40" cy="251.81" r="1.95" fill="#3e8ef7" stroke="#fff" stroke-width="0.5"/><circle cx="396.53" cy="250.76" r="1.95" fill="#3e8ef7" stroke="#fff" stroke-width="0.5"/><circle cx="401.67" cy="249.17" r="1.95" fill="#3e8ef7" stroke="#fff" stroke-width="0.5"/><circle cx="406.80" cy="248.64" r="1.95" fill="#3e8ef7" stroke="#fff" stroke-width="0.5"/><circle cx="411.93" cy="248.12" r="1.95" fill="#3e8ef7" stroke="#fff" stroke-width="0.5"/><circle cx="417.07" cy="248.12" r="1.95" fill="#3e8ef7" stroke="#fff" stroke-width="0.5"/><circle cx="422.20" cy="247.06" r="1.95" fill="#3e8ef7" stroke="#fff" stroke-width="0.5"/><circle cx="427.33" cy="246.53" r="1.95" fill="#3e8ef7" stroke="#fff" stroke-width="0.5"/><circle cx="432.47" cy="246.00" r="1.95" fill="#3e8ef7" stroke="#fff" stroke-width="0.5"/><circle cx="437.60" cy="246.00" r="1.95" fill="#3e8ef7" stroke="#fff" stroke-width="0.5"/><circle cx="442.73" cy="246.00" r="1.95" fill="#3e8ef7" stroke="#fff" stroke-width="0.5"/><circle cx="447.87" cy="245.47" r="1.95" fill="#3e8ef7" stroke="#fff" stroke-width="0.5"/><circle cx="453.00" cy="244.95" r="1.95" fill="#3e8ef7" stroke="#fff" stroke-width="0.5"/><circle cx="458.13" cy="244.95" r="1.95" fill="#3e8ef7" stroke="#fff" stroke-width="0.5"/><circle cx="463.27" cy="244.42" r="1.95" fill="#3e8ef7" stroke="#fff" stroke-width="0.5"/><circle cx="468.40" cy="244.42" r="1.95" fill="#3e8ef7" stroke="#fff" stroke-width="0.5"/><circle cx="473.53" cy="244.42" r="1.95" fill="#3e8ef7" stroke="#fff" stroke-width="0.5"/><circle cx="478.67" cy="244.42" r="1.95" fill="#3e8ef7" stroke="#fff" stroke-width="0.5"/><circle cx="483.80" cy="244.42" r="1.95" fill="#3e8ef7" stroke="#fff" stroke-width="0.5"/><circle cx="488.93" cy="244.42" r="1.95" fill="#3e8ef7" stroke="#fff" stroke-width="0.5"/><circle cx="494.07" cy="244.42" r="1.95" fill="#3e8ef7" stroke="#fff" stroke-width="0.5"/><circle cx="499.20" cy="244.42" r="1.95" fill="#3e8ef7" stroke="#fff" stroke-width="0.5"/><circle cx="504.33" cy="244.42" r="1.95" fill="#3e8ef7" stroke="#fff" stroke-width="0.5"/><circle cx="509.47" cy="244.42" r="1.95" fill="#3e8ef7" stroke="#fff" stroke-width="0.5"/><circle cx="514.60" cy="244.42" r="1.95" fill="#3e8ef7" stroke="#fff" stroke-width="0.5"/><circle cx="519.73" cy="244.42" r="1.95" fill="#3e8ef7" stroke="#fff" stroke-width="0.5"/><circle cx="524.87" cy="244.42" r="1.95" fill="#3e8ef7" stroke="#fff" stroke-width="0.5"/><circle cx="530.00" cy="244.42" r="1.95" fill="#3e8ef7" stroke="#fff" stroke-width="0.5"/><circle cx="535.13" cy="244.42" r="1.95" fill="#3e8ef7" stroke="#fff" stroke-width="0.5"/><circle cx="540.27" cy="244.42" r="1.95" fill="#3e8ef7" stroke="#fff" stroke-width="0.5"/><circle cx="545.40" cy="244.42" r="1.95" fill="#3e8ef7" stroke="#fff" stroke-width="0.5"/><circle cx="550.53" cy="244.42" r="1.95" fill="#3e8ef7" stroke="#fff" stroke-width="0.5"/><circle cx="555.67" cy="244.42" r="1.95" fill="#3e8ef7" stroke="#fff" stroke-width="0.5"/><circle cx="560.80" cy="244.42" r="1.95" fill="#3e8ef7" stroke="#fff" stroke-width="0.5"/><circle cx="565.93" cy="244.42" r="1.95" fill="#3e8ef7" stroke="#fff" stroke-width="0.5"/><circle cx="571.07" cy="244.42" r="1.95" fill="#3e8ef7" stroke="#fff" stroke-width="0.5"/><circle cx="576.20" cy="244.42" r="1.95" fill="#3e8ef7" stroke="#fff" stroke-width="0.5"/><circle cx="581.33" cy="244.42" r="1.95" fill="#3e8ef7" stroke="#fff" stroke-width="0.5"/><circle cx="586.47" cy="244.42" r="1.95" fill="#3e8ef7" stroke="#fff" stroke-width="0.5"/><circle cx="591.60" cy="244.42" r="1.95" fill="#3e8ef7" stroke="#fff" stroke-width="0.5"/><circle cx="596.73" cy="244.42" r="1.95" fill="#3e8ef7" stroke="#fff" stroke-width="0.5"/><circle cx="601.87" cy="244.42" r="1.95" fill="#3e8ef7" stroke="#fff" stroke-width="0.5"/><circle cx="607.00" cy="244.42" r="1.95" fill="#3e8ef7" stroke="#fff" stroke-width="0.5"/><circle cx="360.60" cy="262.90" r="1.95" fill="#11c26d" stroke="#fff" stroke-width="0.5"/><circle cx="365.73" cy="263.43" r="1.95" fill="#11c26d" stroke="#fff" stroke-width="0.5"/><circle cx="370.87" cy="263.43" r="1.95" fill="#11c26d" stroke="#fff" stroke-width="0.5"/><circle cx="376.00" cy="263.43" r="1.95" fill="#11c26d" stroke="#fff" stroke-width="0.5"/><circle cx="381.13" cy="262.38" r="1.95" fill="#11c26d" stroke="#fff" stroke-width="0.5"/><circle cx="386.27" cy="262.38" r="1.95" fill="#11c26d" stroke="#fff" stroke-width="0.5"/><circle cx="391.40" cy="262.38" r="1.95" fill="#11c26d" stroke="#fff" stroke-width="0.5"/><circle cx="396.53" cy="261.85" r="1.95" fill="#11c26d" stroke="#fff" stroke-width="0.5"/><circle cx="401.67" cy="264.49" r="1.95" fill="#11c26d" stroke="#fff" stroke-width="0.5"/><circle cx="406.80" cy="262.90" r="1.95" fill="#11c26d" stroke="#fff" stroke-width="0.5"/><circle cx="411.93" cy="261.85" r="1.95" fill="#11c26d" stroke="#fff" stroke-width="0.5"/><circle cx="417.07" cy="261.32" r="1.95" fill="#11c26d" stroke="#fff" stroke-width="0.5"/><circle cx="422.20" cy="260.79" r="1.95" fill="#11c26d" stroke="#fff" stroke-width="0.5"/><circle cx="427.33" cy="260.26" r="1.95" fill="#11c26d" stroke="#fff" stroke-width="0.5"/><circle cx="432.47" cy="259.21" r="1.95" fill="#11c26d" stroke="#fff" stroke-width="0.5"/><circle cx="437.60" cy="259.73" r="1.95" fill="#11c26d" stroke="#fff" stroke-width="0.5"/><circle cx="442.73" cy="258.68" r="1.95" fill="#11c26d" stroke="#fff" stroke-width="0.5"/><circle cx="447.87" cy="258.68" r="1.95" fill="#11c26d" stroke="#fff" stroke-width="0.5"/><circle cx="453.00" cy="258.15" r="1.95" fill="#11c26d" stroke="#fff" stroke-width="0.5"/><circle cx="458.13" cy="258.15" r="1.95" fill="#11c26d" stroke="#fff" stroke-width="0.5"/><circle cx="463.27" cy="259.21" r="1.95" fill="#11c26d" stroke="#fff" stroke-width="0.5"/><circle cx="468.40" cy="259.21" r="1.95" fill="#11c26d" stroke="#fff" stroke-width="0.5"/><circle cx="473.53" cy="260.26" r="1.95" fill="#11c26d" stroke="#fff" stroke-width="0.5"/><circle cx="478.67" cy="260.79" r="1.95" fill="#11c26d" stroke="#fff" stroke-width="0.5"/><circle cx="483.80" cy="260.79" r="1.95" fill="#11c26d" stroke="#fff" stroke-width="0.5"/><circle cx="488.93" cy="260.79" r="1.95" fill="#11c26d" stroke="#fff" stroke-width="0.5"/><circle cx="494.07" cy="261.32" r="1.95" fill="#11c26d" stroke="#fff" stroke-width="0.5"/><circle cx="499.20" cy="262.38" r="1.95" fill="#11c26d" stroke="#fff" stroke-width="0.5"/><circle cx="504.33" cy="265.54" r="1.95" fill="#11c26d" stroke="#fff" stroke-width="0.5"/><circle cx="509.47" cy="268.18" r="1.95" fill="#11c26d" stroke="#fff" stroke-width="0.5"/><circle cx="514.60" cy="270.30" r="1.95" fill="#11c26d" stroke="#fff" stroke-width="0.5"/><circle cx="519.73" cy="270.82" r="1.95" fill="#11c26d" stroke="#fff" stroke-width="0.5"/><circle cx="524.87" cy="272.67" r="1.95" fill="#11c26d" stroke="#fff" stroke-width="0.5"/><circle cx="530.00" cy="274.52" r="1.95" fill="#11c26d" stroke="#fff" stroke-width="0.5"/><circle cx="535.13" cy="275.05" r="1.95" fill="#11c26d" stroke="#fff" stroke-width="0.5"/><circle cx="540.27" cy="275.58" r="1.95" fill="#11c26d" stroke="#fff" stroke-width="0.5"/><circle cx="545.40" cy="276.11" r="1.95" fill="#11c26d" stroke="#fff" stroke-width="0.5"/><circle cx="550.53" cy="276.11" r="1.95" fill="#11c26d" stroke="#fff" stroke-width="0.5"/><circle cx="555.67" cy="276.37" r="1.95" fill="#11c26d" stroke="#fff" stroke-width="0.5"/><circle cx="560.80" cy="276.63" r="1.95" fill="#11c26d" stroke="#fff" stroke-width="0.5"/><circle cx="565.93" cy="276.63" r="1.95" fill="#11c26d" stroke="#fff" stroke-width="0.5"/><circle cx="571.07" cy="276.90" r="1.95" fill="#11c26d" stroke="#fff" stroke-width="0.5"/><circle cx="576.20" cy="277.16" r="1.95" fill="#11c26d" stroke="#fff" stroke-width="0.5"/><circle cx="581.33" cy="277.43" r="1.95" fill="#11c26d" stroke="#fff" stroke-width="0.5"/><circle cx="586.47" cy="277.69" r="1.95" fill="#11c26d" stroke="#fff" stroke-width="0.5"/><circle cx="591.60" cy="278.22" r="1.95" fill="#11c26d" stroke="#fff" stroke-width="0.5"/><circle cx="596.73" cy="278.75" r="1.95" fill="#11c26d" stroke="#fff" stroke-width="0.5"/><circle cx="601.87" cy="279.27" r="1.95" fill="#11c26d" stroke="#fff" stroke-width="0.5"/><circle cx="607.00" cy="280.07" r="1.95" fill="#11c26d" stroke="#fff" stroke-width="0.5"/><text transform="translate(359.60 288.00) rotate(-50)" font-size="5.9" fill="#666" text-anchor="end" x="0" y="2.1">2018-05</text><text transform="translate(375.00 288.00) rotate(-50)" font-size="5.9" fill="#666" text-anchor="end" x="0" y="2.1">2018-08</text><text transform="translate(390.40 288.00) rotate(-50)" font-size="5.9" fill="#666" text-anchor="end" x="0" y="2.1">2018-11</text><text transform="translate(405.80 288.00) rotate(-50)" font-size="5.9" fill="#666" text-anchor="end" x="0" y="2.1">2019-02</text><text transform="translate(421.20 288.00) rotate(-50)" font-size="5.9" fill="#666" text-anchor="end" x="0" y="2.1">2019-05</text><text transform="translate(436.60 288.00) rotate(-50)" font-size="5.9" fill="#666" text-anchor="end" x="0" y="2.1">2019-08</text><text transform="translate(452.00 288.00) rotate(-50)" font-size="5.9" fill="#666" text-anchor="end" x="0" y="2.1">2019-11</text><text transform="translate(467.40 288.00) rotate(-50)" font-size="5.9" fill="#666" text-anchor="end" x="0" y="2.1">2020-02</text><text transform="translate(482.80 288.00) rotate(-50)" font-size="5.9" fill="#666" text-anchor="end" x="0" y="2.1">2020-05</text><text transform="translate(498.20 288.00) rotate(-50)" font-size="5.9" fill="#666" text-anchor="end" x="0" y="2.1">2020-08</text><text transform="translate(513.60 288.00) rotate(-50)" font-size="5.9" fill="#666" text-anchor="end" x="0" y="2.1">2020-11</text><text transform="translate(529.00 288.00) rotate(-50)" font-size="5.9" fill="#666" text-anchor="end" x="0" y="2.1">2021-02</text><text transform="translate(544.40 288.00) rotate(-50)" font-size="5.9" fill="#666" text-anchor="end" x="0" y="2.1">2021-05</text><text transform="translate(559.80 288.00) rotate(-50)" font-size="5.9" fill="#666" text-anchor="end" x="0" y="2.1">2021-08</text><text transform="translate(575.20 288.00) rotate(-50)" font-size="5.9" fill="#666" text-anchor="end" x="0" y="2.1">2021-11</text><text transform="translate(590.60 288.00) rotate(-50)" font-size="5.9" fill="#666" text-anchor="end" x="0" y="2.1">2022-02</text><text transform="translate(606.00 288.00) rotate(-50)" font-size="5.9" fill="#666" text-anchor="end" x="0" y="2.1">2022-05</text><rect x="407.45" y="230.3" width="20.50" height="6.2" fill="#74e8ab" stroke="#11c26d" stroke-width="0.9"/><text x="430.80" y="234.9" font-size="6" fill="#666" textLength="57.00" lengthAdjust="spacingAndGlyphs">Institutional Members</text><rect x="492.45" y="230.3" width="20.50" height="6.2" fill="#9bc5fd" stroke="#3e8ef7" stroke-width="0.9"/><text x="515.70" y="234.9" font-size="6" fill="#666" textLength="24.20" lengthAdjust="spacingAndGlyphs">Institutes</text></svg>
<div class="card" style="left:30px;top:689px;width:595px;height:160px"></div>
<span class="t" style="left:174.4px;top:718.649px;font-size:14px;line-height:1.5;color:#76838f;transform:scaleX(0.9273);transform-origin:0 0;">MEMBERSHIPS/USERS COUNTRY DISTRIBUTION</span>
<div class="b" style="left:80px;top:760.4px;width:22px;height:22px;background:#526069;border-radius:3px"></div>
<div class="b" style="left:110px;top:760.4px;width:22px;height:22px;background:#526069;border-radius:3px"></div>
<span class="t" style="left:86.712px;top:760.849px;font-size:14px;line-height:1.5;color:#fff;font-weight:700;">+</span>
<span class="t" style="left:117.179px;top:761.803px;font-size:12.4px;line-height:1.5;color:#fff;font-weight:700;">−</span>
<svg class="i" style="left:30px;top:752px;width:595px;height:48px;" viewBox="15 376 297.5 24" preserveAspectRatio="none"><path d="M106.600 384.100L110 383.400L114.400 382.400L117.500 381.600L120.600 381L124 380.600L128.400 380.500L133 380.600L137.800 380.900L141.500 381.400L145.800 382.400L143.600 383.600L144.600 384.800L142.500 385.800L143 387.500L141.700 390L141.900 392L140.200 394.750L140 397.500L139.400 400L113.600 400L112.500 398L111.250 396.300L109.500 394.600L108.100 393.200L105.500 392L103.400 390.800L102.500 389.600L101.900 388.500L102.400 387.200L103.400 386.200L105 385.200Z" fill="#bddafd"/><path d="M83.500 385.600L86.500 384.400L89 383.300L92 382.500L96 381.900L100.300 381.600L104.500 381.500L108.300 381.900L106 383L103.500 383.800L100.500 384.600L97.500 385.200L99.500 386.200L102 386.600L100.500 388L98.800 389.400L96.500 390.600L94 391.200L91.500 390.800L92.500 389.400L90.200 388.800L88 388.600L86.500 387.400L84.500 386.800Z" fill="#bddafd"/><path d="M77.500 388L80 387.400L82.500 388.200L81.500 389.600L78.500 389.800ZM64.500 391.200L67.500 390.400L70 391.200L73 390.800L76.500 391.800L75 393.400L71.500 393.800L68 393.200L65.500 393.400ZM78 391.600L81.500 391L84.500 392L86.500 393.600L84 394.800L80.500 394.600L78.500 393.400ZM88 392.400L90.500 392L92 393.400L89.500 394.200ZM61.800 396L65 395L68.500 395.600L72 395.200L75.500 396L74.500 397.600L77 398.400L76 400L62.500 400L63.600 398ZM79 396L82.500 395.400L85 396.400L84 398.200L86.500 399L86 400L78.500 400L80 398.200ZM88.500 396.400L91.500 395.600L94.500 396.200L97 395.400L99.500 396.200L100.300 398L99 400L88 400L89.500 398.200Z" fill="#bddafd"/><path d="M163.600 387.500L166.500 386.200L169 387L171.500 385.600L175 386.400L173 388.200L170.500 388.600L169.500 391L167 390.200L166 388.600Z" fill="#bddafd"/><path d="M193.600 400L194.400 398.600L196 396.600L198.200 394.800L200.800 393.400L203.200 392.400L204.900 391.900L203.600 393L201.200 394.200L199 395.600L197.200 397.400L196 399.200L195.800 400Z" fill="#fdeaea"/><path d="M204.500 400L205.500 398.600L208 398.400L210.500 397.400L213.300 397.200L215.500 396L219.300 395.100L221.500 393.800L224.500 393.400L227.500 392.200L231.300 391.600L233.500 392.400L237.300 392.900L238.200 394.200L239.100 395.500L243 395.800L246.500 396.500L249.400 396.700L251.500 397.300L254 397.400L257.500 397.200L261.500 397.600L264.500 398.200L267.500 399.200L268 400Z" fill="#fdeaea"/><path d="M224.500 385.600L226.500 384.700L228.600 385.200L229.600 386.400L231.500 387.200L233 388.400L231.200 389.400L229 388.600L227 387.200L225 386.600ZM190.300 385.200L191.300 384.900L191.800 385.600L190.800 386ZM257 393L259.500 392.400L262 392.700L261.500 393.600L258.500 393.800ZM260.500 394.800L263.500 394.400L266.500 395.200L265.500 396.200L262 396ZM289.200 398.600L290.200 398.400L290.500 399.100L289.500 399.300Z" fill="#fdeaea"/></svg>
<div class="card" style="left:655px;top:689px;width:595px;height:160px"></div>
<span class="t" style="left:771px;top:718.649px;font-size:14px;line-height:1.5;color:#76838f;transform:scaleX(0.9351);transform-origin:0 0;">INSTITUTIONAL MEMBERSHIPS COUNTRY DISTRIBUTION</span>
<div class="b" style="left:705px;top:760.4px;width:22px;height:22px;background:#526069;border-radius:3px"></div>
<div class="b" style="left:735px;top:760.4px;width:22px;height:22px;background:#526069;border-radius:3px"></div>
<span class="t" style="left:711.712px;top:760.849px;font-size:14px;line-height:1.5;color:#fff;font-weight:700;">+</span>
<span class="t" style="left:742.179px;top:761.803px;font-size:12.4px;line-height:1.5;color:#fff;font-weight:700;">−</span>
<svg class="i" style="left:655px;top:752px;width:595px;height:48px;" viewBox="15 376 297.5 24" preserveAspectRatio="none"><path d="M106.600 384.100L110 383.400L114.400 382.400L117.500 381.600L120.600 381L124 380.600L128.400 380.500L133 380.600L137.800 380.900L141.500 381.400L145.800 382.400L143.600 383.600L144.600 384.800L142.500 385.800L143 387.500L141.700 390L141.900 392L140.200 394.750L140 397.500L139.400 400L113.600 400L112.500 398L111.250 396.300L109.500 394.600L108.100 393.200L105.500 392L103.400 390.800L102.500 389.600L101.900 388.500L102.400 387.200L103.400 386.200L105 385.200Z" fill="#bddafd"/><path d="M83.500 385.600L86.500 384.400L89 383.300L92 382.500L96 381.900L100.300 381.600L104.500 381.500L108.300 381.900L106 383L103.500 383.800L100.500 384.600L97.500 385.200L99.500 386.200L102 386.600L100.500 388L98.800 389.400L96.500 390.600L94 391.200L91.500 390.800L92.500 389.400L90.200 388.800L88 388.600L86.500 387.400L84.500 386.800Z" fill="#bddafd"/><path d="M77.500 388L80 387.400L82.500 388.200L81.500 389.600L78.500 389.800ZM64.500 391.200L67.500 390.400L70 391.200L73 390.800L76.500 391.800L75 393.400L71.500 393.800L68 393.200L65.500 393.400ZM78 391.600L81.500 391L84.500 392L86.500 393.600L84 394.800L80.500 394.600L78.500 393.400ZM88 392.400L90.500 392L92 393.400L89.500 394.200ZM61.800 396L65 395L68.500 395.600L72 395.200L75.500 396L74.500 397.600L77 398.400L76 400L62.500 400L63.600 398ZM79 396L82.500 395.400L85 396.400L84 398.200L86.500 399L86 400L78.500 400L80 398.200ZM88.500 396.400L91.500 395.600L94.500 396.200L97 395.400L99.500 396.200L100.300 398L99 400L88 400L89.500 398.200Z" fill="#bddafd"/><path d="M163.600 387.500L166.500 386.200L169 387L171.500 385.600L175 386.400L173 388.200L170.500 388.600L169.500 391L167 390.200L166 388.600Z" fill="#e9868b"/><path d="M193.600 400L194.400 398.600L196 396.600L198.200 394.800L200.800 393.400L203.200 392.400L204.900 391.900L203.600 393L201.200 394.200L199 395.600L197.200 397.400L196 399.200L195.800 400Z" fill="#bddafd"/><path d="M204.500 400L205.500 398.600L208 398.400L210.500 397.400L213.300 397.200L215.500 396L219.300 395.100L221.500 393.800L224.500 393.400L227.500 392.200L231.300 391.600L233.500 392.400L237.300 392.900L238.200 394.200L239.100 395.500L243 395.800L246.500 396.500L249.400 396.700L251.500 397.300L254 397.400L257.500 397.200L261.500 397.600L264.500 398.200L267.500 399.200L268 400Z" fill="#bddafd"/><path d="M224.500 385.600L226.500 384.700L228.600 385.200L229.600 386.400L231.500 387.200L233 388.400L231.200 389.400L229 388.600L227 387.200L225 386.600ZM190.300 385.200L191.300 384.900L191.800 385.600L190.800 386ZM257 393L259.500 392.400L262 392.700L261.500 393.600L258.500 393.800ZM260.500 394.800L263.500 394.400L266.500 395.200L265.500 396.200L262 396ZM289.200 398.600L290.200 398.400L290.500 399.100L289.500 399.300Z" fill="#bddafd"/></svg>
</div></body></html>
